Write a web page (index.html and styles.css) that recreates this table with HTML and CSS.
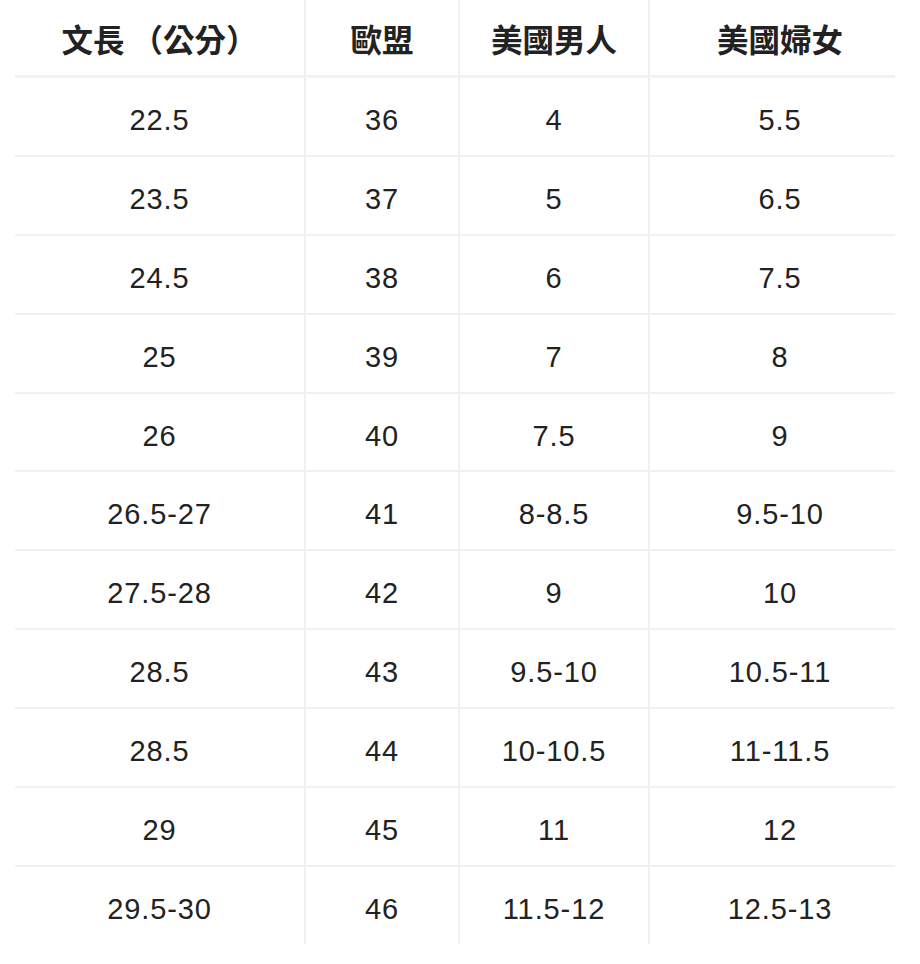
FILE: index.html
```html
<!DOCTYPE html>
<html lang="zh-Hant">
<head>
<meta charset="utf-8">
<title>尺寸表</title>
<link rel="stylesheet" href="styles.css">
</head>
<body>
<div class="size-table">
  <div class="cell head">文長 （公分）</div>
  <div class="cell head">歐盟</div>
  <div class="cell head">美國男人</div>
  <div class="cell head last-col">美國婦女</div>

  <div class="cell">22.5</div><div class="cell">36</div><div class="cell">4</div><div class="cell last-col">5.5</div>
  <div class="cell">23.5</div><div class="cell">37</div><div class="cell">5</div><div class="cell last-col">6.5</div>
  <div class="cell">24.5</div><div class="cell">38</div><div class="cell">6</div><div class="cell last-col">7.5</div>
  <div class="cell">25</div><div class="cell">39</div><div class="cell">7</div><div class="cell last-col">8</div>
  <div class="cell">26</div><div class="cell">40</div><div class="cell">7.5</div><div class="cell last-col">9</div>
  <div class="cell">26.5-27</div><div class="cell">41</div><div class="cell">8-8.5</div><div class="cell last-col">9.5-10</div>
  <div class="cell">27.5-28</div><div class="cell">42</div><div class="cell">9</div><div class="cell last-col">10</div>
  <div class="cell">28.5</div><div class="cell">43</div><div class="cell">9.5-10</div><div class="cell last-col">10.5-11</div>
  <div class="cell">28.5</div><div class="cell">44</div><div class="cell">10-10.5</div><div class="cell last-col">11-11.5</div>
  <div class="cell">29</div><div class="cell">45</div><div class="cell">11</div><div class="cell last-col">12</div>
  <div class="cell last-row">29.5-30</div><div class="cell last-row">46</div><div class="cell last-row">11.5-12</div><div class="cell last-row last-col">12.5-13</div>
</div>
</body>
</html>
```

FILE: styles.css
```css
html, body {
  background: #ffffff;
}

body {
  margin: 0 0 0 15px;
  color: #222222;
  font-family: "Liberation Sans", Arial, "Noto Sans CJK TC", sans-serif;
}

.size-table {
  display: grid;
  grid-template-columns: 291px 154px 190px 260px;
  width: 895px;
}

.cell {
  box-sizing: border-box;
  border-right: 2px solid #f0f0f0;
  border-bottom: 2px solid #f0f0f0;
  text-align: center;
  font-size: 29px;
  letter-spacing: 0.9px;
  line-height: 36px;
  padding: 24px 0 16.9px;
  white-space: nowrap;
}

.cell.head {
  font-family: "Noto Sans CJK TC", "Noto Sans CJK SC", sans-serif;
  font-weight: 700;
  font-size: 31.5px;
  letter-spacing: 0;
  padding: 20px 0 19px;
  border-bottom-width: 3px;
  border-bottom-color: #f2f2f2;
}

.cell.last-col {
  border-right: none;
  border-bottom: none;
  padding-bottom: 18.9px;
  background: linear-gradient(#f0f0f0, #f0f0f0) left bottom / 245px 2px no-repeat;
}

.cell.head.last-col {
  padding-bottom: 22px;
  background: linear-gradient(#f2f2f2, #f2f2f2) left bottom / 245px 3px no-repeat;
}

.cell.last-row {
  border-bottom: none;
  padding-bottom: 17px;
}

.cell.last-row.last-col {
  background: none;
}
```
